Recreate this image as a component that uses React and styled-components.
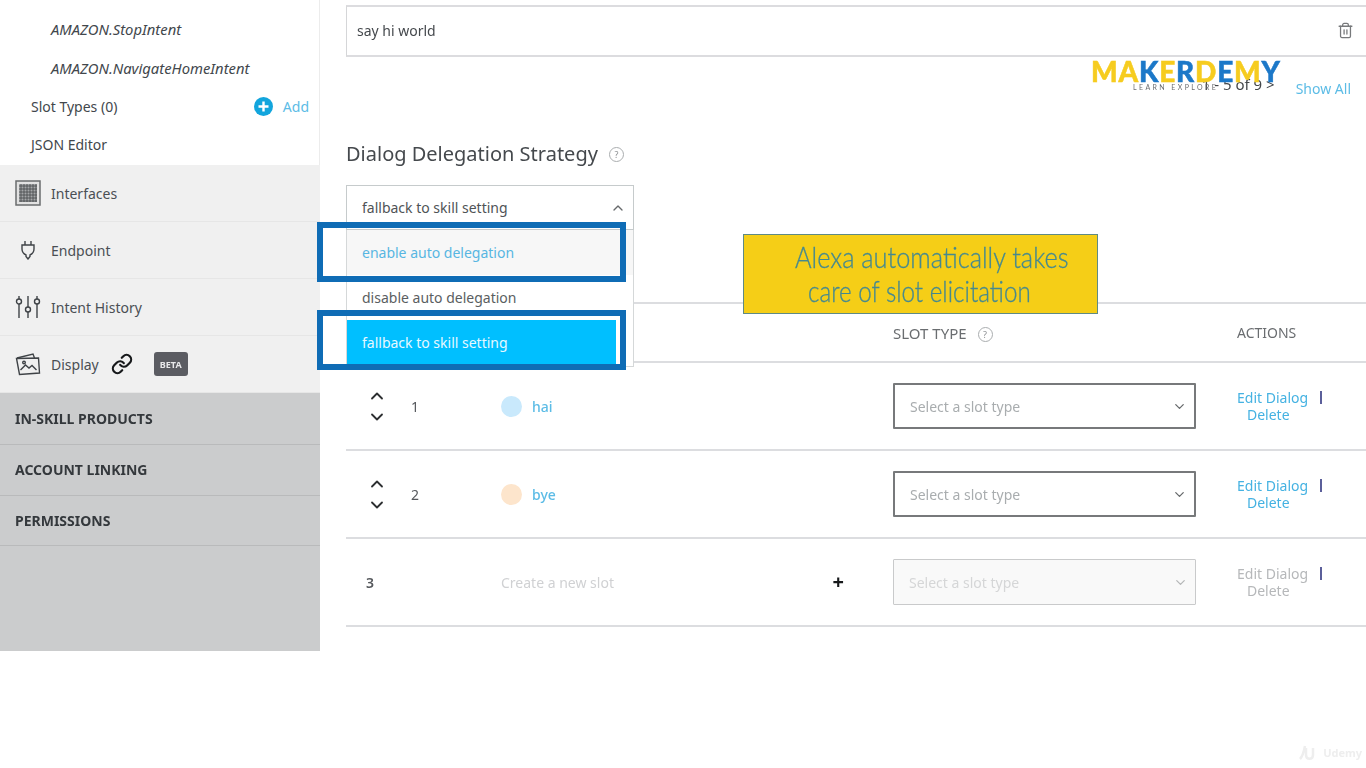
import React from 'react';
import styled, { createGlobalStyle } from 'styled-components';
import { Link, Trash2, ChevronUp, ChevronDown } from 'lucide-react';

const GlobalStyles = createGlobalStyle`
  html, body {
    margin: 0;
    padding: 0;
    background: #fff;
  }
  body {
    font-family: "Noto Sans", "Open Sans", sans-serif;
    font-size: 14px;
    color: #4a4f54;
    overflow: hidden;
  }
`;

const Page = styled.div`
  position: relative;
  width: 1366px;
  height: 768px;
  display: flex;
  align-items: flex-start;
  overflow: hidden;
  filter: blur(0.35px);
`;

const Sidebar = styled.aside`
  width: 320px;
  height: 651px;
  flex: none;
  display: flex;
  flex-direction: column;
  background: #cbcccd;
`;

const TreeList = styled.div`
  height: 165px;
  box-sizing: border-box;
  padding-top: 10px;
  background: #fff;
  border-right: 1px solid #ececec;
`;

const TreeItem = styled.div`
  height: 38.5px;
  display: flex;
  align-items: center;
  justify-content: space-between;
  padding: 0 10px 0 ${p => (p.$nested ? 51 : 31)}px;
  font-size: ${p => (p.$nested ? 14.8 : 14)}px;
  font-style: ${p => (p.$nested ? 'italic' : 'normal')};
  color: #42474c;
`;

const AddLink = styled.span`
  display: flex;
  align-items: center;
  gap: 10px;
  color: #5cbce6;
  font-size: 14px;
`;

const NavRow = styled.div`
  height: 57px;
  box-sizing: border-box;
  display: flex;
  align-items: center;
  padding-left: 15px;
  background: #f0f0f0;
  border-bottom: 1px solid #e6e6e6;
  color: #4a4f54;
`;

const NavIcon = styled.span`
  width: 26px;
  height: 26px;
  margin-right: 10px;
  display: flex;
  align-items: center;
  justify-content: center;
  color: #3f4347;
`;

const LinkIcon = styled.span`
  display: flex;
  margin-left: 12px;
  color: #17191b;
`;

const BetaBadge = styled.span`
  margin-left: 21px;
  width: 34px;
  height: 24px;
  border-radius: 3px;
  background: #5b5c62;
  color: #e8e8ea;
  font-size: 9px;
  font-weight: 700;
  display: flex;
  align-items: center;
  justify-content: center;
`;

const SectionRow = styled.div`
  height: ${p => p.$h}px;
  box-sizing: border-box;
  display: flex;
  align-items: center;
  padding: 0 0 1px 15px;
  border-bottom: 1px solid #b9babb;
  font-size: 14px;
  font-weight: 700;
  color: #34383c;
`;

const Main = styled.main`
  flex: 1;
  padding: 5px 0 0 26px;
`;

const PhraseRow = styled.div`
  height: 52px;
  display: flex;
  align-items: center;
  justify-content: space-between;
  padding: 0 12px 1px 10px;
  border: 2px solid #dcdcdf;
  border-right: none;
  border-left: 1px solid #d5d6d8;
  box-sizing: border-box;
  font-size: 14px;
  color: #45494d;
`;

const Pager = styled.div`
  height: 41px;
  display: flex;
  align-items: flex-end;
  justify-content: flex-end;
  padding-right: 15px;
`;

const PageCount = styled.span`
  margin-right: 21px;
  margin-bottom: 4px;
  font-size: 15px;
  color: #44474a;
`;

const ShowAll = styled.span`
  color: #5cbce6;
  font-size: 14px;
`;

const Heading = styled.h2`
  margin: 39px 0 0;
  height: 32px;
  display: flex;
  align-items: center;
  gap: 11px;
  font-size: 20px;
  font-weight: 400;
  color: #45494d;
`;

const HelpMark = styled.span`
  width: 13px;
  height: 13px;
  margin-top: 3px;
  border: 1px solid #a9acae;
  border-radius: 50%;
  display: inline-flex;
  align-items: center;
  justify-content: center;
  font-size: 9px;
  font-weight: 400;
  color: #8c8f92;
`;

const SelectWrap = styled.div`
  position: relative;
  width: 288px;
  margin-top: 16px;
`;

const SelectHead = styled.div`
  height: 45px;
  box-sizing: border-box;
  display: flex;
  align-items: center;
  justify-content: space-between;
  padding: 0 7px 0 15px;
  border: 1px solid #c6cbcc;
  background: #fff;
  color: #4f5356;
`;

const SelectMenu = styled.div`
  position: absolute;
  z-index: 2;
  top: 45px;
  left: 0;
  width: 288px;
  height: 137px;
  box-sizing: border-box;
  border: 1px solid #d5d8d9;
  border-top: none;
  background: #fff;
`;

const MenuItem = styled.div`
  height: 45px;
  display: flex;
  align-items: center;
  padding-left: 15px;
  margin-right: ${p => (p.$selected ? 17 : 0)}px;
  background: ${p => (p.$selected ? '#00bfff' : p.$hover ? '#f7f7f7' : '#fff')};
  color: ${p => (p.$selected ? '#e6f8ff' : p.$hover ? '#58b6e2' : '#5a5e61')};
`;

const SlotTable = styled.div`
  margin-top: 72px;
`;

const TableHead = styled.div`
  height: 61px;
  box-sizing: border-box;
  border-top: 2px solid #dcdde0;
  border-bottom: 2px solid #dcdde0;
  display: grid;
  grid-template-columns: 547px 344px 1fr;
  align-items: center;
  color: #6a6d70;
`;

const HeadCell = styled.span`
  grid-column: ${p => p.$col};
  display: flex;
  align-items: center;
  gap: 11px;
  font-size: ${p => p.$size}px;
`;

const SlotRow = styled.div`
  height: 88px;
  box-sizing: border-box;
  border-bottom: 2px solid #dcdde0;
  display: grid;
  grid-template-columns: 155px 392px 344px 1fr;
  align-items: center;
`;

const OrderCell = styled.div`
  display: flex;
  align-items: center;
  color: #55585c;
`;

const MoveButtons = styled.div`
  width: 22px;
  margin: 0 23px 0 20px;
  display: flex;
  flex-direction: column;
  align-items: center;
  gap: 1px;
  color: #2d2f31;
`;

const OrderNumber = styled.span`
  font-size: 14px;
  margin-left: ${p => (p.$new ? 20 : 0)}px;
  font-weight: ${p => (p.$new ? 600 : 400)};
`;

const NameCell = styled.div`
  display: flex;
  align-items: center;
  gap: 10px;
  color: #5cbce6;
  font-weight: 500;
`;

const Dot = styled.span`
  width: 21px;
  height: 21px;
  border-radius: 50%;
  background: ${p => p.$color};
`;

const NewSlot = styled.div`
  display: flex;
  align-items: center;
  justify-content: space-between;
  padding-right: 49px;
  color: #d0d1d3;
`;

const PlusSign = styled.span`
  color: #17191b;
  font-size: 20px;
  font-weight: 700;
  line-height: 1;
`;

const SlotSelect = styled.div`
  width: 303px;
  height: 46px;
  box-sizing: border-box;
  display: flex;
  align-items: center;
  justify-content: space-between;
  padding: 0 7px 0 15px;
  border: ${p => (p.$disabled ? '1px solid #c9cacb' : '2px solid #77797b')};
  border-radius: 1px;
  background: ${p => (p.$disabled ? '#f9f9f9' : '#fff')};
  color: ${p => (p.$disabled ? '#d5d6d7' : '#a9adaf')};
`;

const Actions = styled.div`
  width: 86px;
  height: 34px;
  display: flex;
  flex-direction: column;
  position: relative;
  line-height: 17px;
  color: ${p => (p.$disabled ? '#b6b8ba' : '#45b2e2')};
`;

const ActionLine = styled.span`
  white-space: nowrap;
  padding-left: ${p => p.$pad}px;
`;

const ActionBar = styled.span`
  position: absolute;
  top: 2px;
  left: 83px;
  width: 2px;
  height: 13px;
  background: #5b5f9a;
`;

/* overlays that the video editor put over the page */
const Highlight = styled.div`
  position: absolute;
  z-index: 3;
  left: 317px;
  top: ${p => p.$top}px;
  width: 309px;
  height: ${p => p.$h}px;
  box-sizing: border-box;
  border: 6px solid #0f6cb5;
`;

const Callout = styled.div`
  position: absolute;
  z-index: 3;
  left: 743px;
  top: 234px;
  width: 355px;
  height: 80px;
  box-sizing: border-box;
  padding-top: 5px;
  background: #f5ce17;
  border: 1px solid #5f8a84;
  color: #46898f;
  font-family: "Lato", sans-serif;
  font-weight: 300;
  font-size: 29px;
  line-height: 34px;
  white-space: nowrap;
  -webkit-text-stroke: 0.3px currentColor;
`;

const CalloutLine = styled.div`
  padding-left: ${p => p.$indent}px;
  transform: scaleX(${p => p.$scale});
  transform-origin: ${p => p.$indent}px 0;
`;

const Logo = styled.div`
  position: absolute;
  z-index: 3;
  left: 1091px;
  top: 57px;
  width: 195px;
  font-family: "Lato", sans-serif;
  font-weight: 900;
  font-size: 28px;
  line-height: 28px;
  letter-spacing: 0.8px;
  white-space: nowrap;
  -webkit-text-stroke: 0.5px currentColor;
`;

const LogoLetter = styled.span`
  color: ${p => (p.$blue ? '#1c78c8' : '#f6cc1f')};
`;

const LogoTag = styled.div`
  position: absolute;
  top: 26px;
  left: 42px;
  font-size: 7px;
  font-weight: 400;
  line-height: 8px;
  letter-spacing: 2.4px;
  color: #6b6d70;
  -webkit-text-stroke: 0;
`;

const Watermark = styled.div`
  position: absolute;
  right: 4px;
  bottom: 8px;
  display: flex;
  align-items: center;
  gap: 5px;
  font-size: 11px;
  font-weight: 700;
  color: #eeeeee;
`;

const GridIcon = () => (
  <svg width="26" height="26" viewBox="0 0 26 26">
    <rect x="1" y="1" width="24" height="24" fill="#e2e2e2" stroke="#6a6c6e" strokeWidth="1.5" />
    <rect x="4" y="4" width="18" height="18" fill="#a5a7a9" />
    <path d="M6 4v18M9 4v18M12 4v18M15 4v18M18 4v18M21 4v18M4 6h18M4 9h18M4 12h18M4 15h18M4 18h18M4 21h18" stroke="#45474a" strokeWidth="0.8" />
  </svg>
);

const PlugIcon = () => (
  <svg width="18" height="20" viewBox="0 0 18 20" fill="none" stroke="#3f4347" strokeWidth="1.4">
    <path d="M6 1v4M12 1v4M3 5h12v4c0 3-2 5-4 6v1.5L9 19l-2-2.5V15c-2-1-4-3-4-6z" />
  </svg>
);

const SlidersIcon = () => (
  <svg width="26" height="26" viewBox="0 0 26 26" fill="none" stroke="#3f4347" strokeWidth="1.4">
    <path d="M4 2v3M4 10v14M13 2v11M13 18v6M22 2v3M22 10v14" />
    <circle cx="4" cy="7.5" r="2.5" />
    <circle cx="13" cy="15.5" r="2.5" />
    <circle cx="22" cy="7.5" r="2.5" />
  </svg>
);

const DisplayIcon = () => (
  <svg width="26" height="24" viewBox="0 0 26 24" fill="none" stroke="#3f4347" strokeWidth="1.4">
    <path d="M2 6l16-4 1.5 4" />
    <path d="M1.5 6.5l22-0.5 1 15-20 1.5z" fill="#f0f0f0" />
    <path d="M5.5 18l5-5 3.5 3 3-2.5 4.5 4.5" />
    <circle cx="9" cy="10.5" r="1.3" />
  </svg>
);

const AddIcon = () => (
  <svg width="19" height="19" viewBox="0 0 19 19">
    <circle cx="9.5" cy="9.5" r="9.5" fill="#12a5dd" />
    <path d="M9.5 4.5v10M4.5 9.5h10" stroke="#fff" strokeWidth="2.4" />
  </svg>
);

const UdemyMark = () => (
  <svg width="20" height="16" viewBox="0 0 20 16" fill="none" stroke="#eeeeee" strokeWidth="2.5">
    <path d="M2 15c3-3 4-8 5-13M8 4v7c0 5 7 5 7 0V4" />
  </svg>
);

const navRows = [
  { label: 'Interfaces', icon: <GridIcon /> },
  { label: 'Endpoint', icon: <PlugIcon /> },
  { label: 'Intent History', icon: <SlidersIcon /> },
];

const sections = [
  { label: 'IN-SKILL PRODUCTS', h: 52 },
  { label: 'ACCOUNT LINKING', h: 51 },
  { label: 'PERMISSIONS', h: 50 },
];

const logoLetters = [
  ['M', false], ['A', false], ['K', true], ['E', false], ['R', true],
  ['D', false], ['E', true], ['M', false], ['Y', true],
];

const slots = [
  { n: 1, name: 'hai', color: '#c9e9fc' },
  { n: 2, name: 'bye', color: '#fde5cc' },
];

const SlotTypeSelect = ({ disabled }) => (
  <SlotSelect $disabled={disabled}>
    Select a slot type
    <ChevronDown size={15} color={disabled ? '#b5b7b8' : '#66696b'} />
  </SlotSelect>
);

const ActionLinks = ({ disabled }) => (
  <Actions $disabled={disabled}>
    <ActionLine $pad={0}>Edit Dialog</ActionLine>
    <ActionLine $pad={10}>Delete</ActionLine>
    <ActionBar />
  </Actions>
);

const App = () => (
  <>
    <GlobalStyles />
    <Page>
      <Sidebar>
        <TreeList>
          <TreeItem $nested>AMAZON.StopIntent</TreeItem>
          <TreeItem $nested>AMAZON.NavigateHomeIntent</TreeItem>
          <TreeItem>
            Slot Types (0)
            <AddLink><AddIcon />Add</AddLink>
          </TreeItem>
          <TreeItem>JSON Editor</TreeItem>
        </TreeList>
        {navRows.map(row => (
          <NavRow key={row.label}>
            <NavIcon>{row.icon}</NavIcon>
            {row.label}
          </NavRow>
        ))}
        <NavRow>
          <NavIcon><DisplayIcon /></NavIcon>
          Display
          <LinkIcon><Link size={22} strokeWidth={2.4} /></LinkIcon>
          <BetaBadge>BETA</BetaBadge>
        </NavRow>
        {sections.map(s => (
          <SectionRow key={s.label} $h={s.h}>{s.label}</SectionRow>
        ))}
      </Sidebar>

      <Main>
        <PhraseRow>
          say hi world
          <Trash2 size={17} color="#77797b" strokeWidth={1.8} />
        </PhraseRow>
        <Pager>
          <PageCount>1 - 5 of 9 &gt;</PageCount>
          <ShowAll>Show All</ShowAll>
        </Pager>
        <Heading>Dialog Delegation Strategy <HelpMark>?</HelpMark></Heading>
        <SelectWrap>
          <SelectHead>
            fallback to skill setting
            <ChevronUp size={16} color="#66696b" />
          </SelectHead>
          <SelectMenu>
            <MenuItem $hover>enable auto delegation</MenuItem>
            <MenuItem>disable auto delegation</MenuItem>
            <MenuItem $selected>fallback to skill setting</MenuItem>
          </SelectMenu>
        </SelectWrap>
        <SlotTable>
          <TableHead>
            <HeadCell $col={2} $size={15}>SLOT TYPE <HelpMark>?</HelpMark></HeadCell>
            <HeadCell $col={3} $size={14}>ACTIONS</HeadCell>
          </TableHead>
          {slots.map(slot => (
            <SlotRow key={slot.n}>
              <OrderCell>
                <MoveButtons>
                  <ChevronUp size={20} strokeWidth={2.2} />
                  <ChevronDown size={20} strokeWidth={2.2} />
                </MoveButtons>
                <OrderNumber>{slot.n}</OrderNumber>
              </OrderCell>
              <NameCell><Dot $color={slot.color} />{slot.name}</NameCell>
              <SlotTypeSelect />
              <ActionLinks />
            </SlotRow>
          ))}
          <SlotRow>
            <OrderCell><OrderNumber $new>3</OrderNumber></OrderCell>
            <NewSlot>Create a new slot<PlusSign>+</PlusSign></NewSlot>
            <SlotTypeSelect disabled />
            <ActionLinks disabled />
          </SlotRow>
        </SlotTable>
      </Main>

      <Highlight $top={222} $h={60} />
      <Highlight $top={310} $h={60} />
      <Callout>
        <CalloutLine $indent={51} $scale={0.875}>Alexa automatically takes</CalloutLine>
        <CalloutLine $indent={64} $scale={0.835}>care of slot elicitation</CalloutLine>
      </Callout>
      <Logo>
        {logoLetters.map(([ch, blue], i) => (
          <LogoLetter key={i} $blue={blue}>{ch}</LogoLetter>
        ))}
        <LogoTag>LEARN EXPLORE</LogoTag>
      </Logo>
      <Watermark><UdemyMark />Udemy</Watermark>
    </Page>
  </>
);

export default App;
